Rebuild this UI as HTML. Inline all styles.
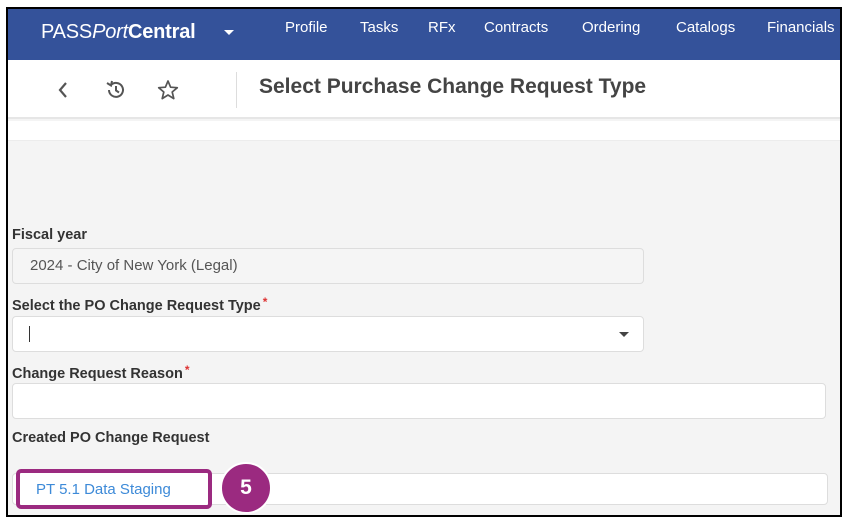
<!DOCTYPE html>
<html><head><style>
*{margin:0;padding:0;box-sizing:border-box}
body{width:848px;height:522px;background:#fff;position:relative;overflow:hidden;font-family:"Liberation Sans",sans-serif}
#frame{position:absolute;left:6px;top:7px;width:836px;height:510px;border:2px solid #000;background:#f4f4f4;overflow:hidden}
.hdr{position:absolute;left:0;top:0;width:100%;height:51px;background:#34529a;color:#fff}
.hdr .logo{position:absolute;left:33px;top:12px;font-size:20px;letter-spacing:-0.2px}
.hdr .nav{position:absolute;top:10px;font-size:15px}
.tb{position:absolute;left:0;top:51px;width:100%;height:59px;background:#fff;border-bottom:2px solid #e6e6e6}
.band{position:absolute;left:0;top:112px;width:100%;height:20px;background:#fff;border-bottom:1px solid #ececec}
.lbl{position:absolute;left:4px;font-size:14.5px;font-weight:bold;color:#333}
.req{color:#d33;font-size:12px;vertical-align:4px;margin-left:2px}
.inp{position:absolute;left:4px;border:1px solid #ddd;border-radius:4px;background:#fff}
</style></head><body>
<div id="frame">
<div class="hdr">
<div class="logo">PASS<i>Port</i><b>Central</b></div>
<div style="position:absolute;left:216px;top:21px;width:0;height:0;border-left:5px solid transparent;border-right:5px solid transparent;border-top:5px solid #fff"></div>
<span class="nav" style="left:277px">Profile</span>
<span class="nav" style="left:352px">Tasks</span>
<span class="nav" style="left:420px">RFx</span>
<span class="nav" style="left:476px">Contracts</span>
<span class="nav" style="left:574px">Ordering</span>
<span class="nav" style="left:668px">Catalogs</span>
<span class="nav" style="left:759px">Financials</span>
</div>
<div class="tb">
<svg style="position:absolute;left:48px;top:20px" width="14" height="20" viewBox="0 0 14 20"><path d="M10 3 L4 10 L10 17" fill="none" stroke="#555" stroke-width="2.2"/></svg>
<svg style="position:absolute;left:97px;top:19px" width="22" height="22" viewBox="0 0 22 22"><path d="M4 11 A7 7 0 1 0 6 6" fill="none" stroke="#555" stroke-width="2"/><path d="M2 4 L6 6.5 L7 2" fill="none" stroke="#555" stroke-width="2"/><path d="M11 7 V11.5 L14 13.5" fill="none" stroke="#555" stroke-width="2"/></svg>
<svg style="position:absolute;left:148px;top:19px" width="24" height="22" viewBox="0 0 24 22"><path d="M12 2 L14.6 8.2 L21.3 8.7 L16.2 13 L17.8 19.6 L12 16 L6.2 19.6 L7.8 13 L2.7 8.7 L9.4 8.2 Z" fill="none" stroke="#555" stroke-width="1.7" stroke-linejoin="round"/></svg>
<div style="position:absolute;left:228px;top:12px;width:1px;height:36px;background:#ddd"></div>
<div style="position:absolute;left:251px;top:15px;font-size:21px;font-weight:bold;color:#444">Select Purchase Change Request Type</div>
</div>
<div class="band"></div>
<div class="lbl" style="top:218px">Fiscal year</div>
<div class="inp" style="top:239px;width:632px;height:36px;background:#f5f5f5"><span style="position:absolute;left:17px;top:8px;font-size:15px;color:#555">2024 - City of New York (Legal)</span></div>
<div class="lbl" style="top:286px">Select the PO Change Request Type<span class="req">*</span></div>
<div class="inp" style="top:307px;width:632px;height:36px"><div style="position:absolute;left:16px;top:9px;width:1px;height:16px;background:#333"></div><div style="position:absolute;left:606px;top:15px;border-left:5px solid transparent;border-right:5px solid transparent;border-top:5px solid #444"></div></div>
<div class="lbl" style="top:354px">Change Request Reason<span class="req">*</span></div>
<div class="inp" style="top:374px;width:814px;height:36px"></div>
<div class="lbl" style="top:421px">Created PO Change Request</div>
<div class="inp" style="top:464px;width:816px;height:32px"></div>
<div style="position:absolute;left:8px;top:460px;width:196px;height:40px;border:4px solid #9b2a80;border-radius:5px;background:#fff"><span style="position:absolute;left:16px;top:8px;font-size:15px;color:#3d8ad8">PT 5.1 Data Staging</span></div>
<div style="position:absolute;left:212px;top:453px;width:52px;height:52px;border-radius:50%;background:#9b2a80;border:2px solid #fff;color:#fff;font-weight:bold;font-size:21px;text-align:center;line-height:48px">5</div>
</div>
</body></html>
